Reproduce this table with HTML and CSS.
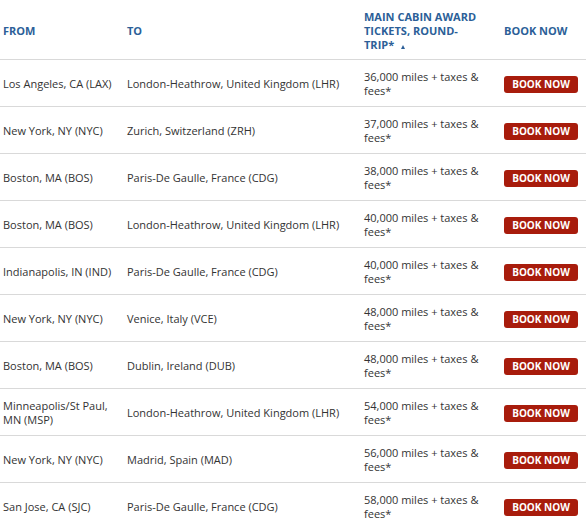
FILE: index.html
```html
<!DOCTYPE html>
<html>
<head>
<meta charset="utf-8">
<link rel="stylesheet" href="styles.css">
</head>
<body>
<table class="awards">
  <colgroup>
    <col class="c-from">
    <col class="c-to">
    <col class="c-miles">
    <col class="c-book">
  </colgroup>
  <thead>
    <tr>
      <th>FROM</th>
      <th>TO</th>
      <th>MAIN CABIN AWARD TICKETS, ROUND-TRIP*<span class="sort"></span></th>
      <th>BOOK NOW</th>
    </tr>
  </thead>
  <tbody>
    <tr><td>Los Angeles, CA (LAX)</td><td>London-Heathrow, United Kingdom (LHR)</td><td>36,000 miles + taxes &amp; fees*</td><td><a class="btn">BOOK NOW</a></td></tr>
    <tr><td>New York, NY (NYC)</td><td>Zurich, Switzerland (ZRH)</td><td>37,000 miles + taxes &amp; fees*</td><td><a class="btn">BOOK NOW</a></td></tr>
    <tr><td>Boston, MA (BOS)</td><td>Paris-De Gaulle, France (CDG)</td><td>38,000 miles + taxes &amp; fees*</td><td><a class="btn">BOOK NOW</a></td></tr>
    <tr><td>Boston, MA (BOS)</td><td>London-Heathrow, United Kingdom (LHR)</td><td>40,000 miles + taxes &amp; fees*</td><td><a class="btn">BOOK NOW</a></td></tr>
    <tr><td>Indianapolis, IN (IND)</td><td>Paris-De Gaulle, France (CDG)</td><td>40,000 miles + taxes &amp; fees*</td><td><a class="btn">BOOK NOW</a></td></tr>
    <tr><td>New York, NY (NYC)</td><td>Venice, Italy (VCE)</td><td>48,000 miles + taxes &amp; fees*</td><td><a class="btn">BOOK NOW</a></td></tr>
    <tr><td>Boston, MA (BOS)</td><td>Dublin, Ireland (DUB)</td><td>48,000 miles + taxes &amp; fees*</td><td><a class="btn">BOOK NOW</a></td></tr>
    <tr><td>Minneapolis/St Paul, MN (MSP)</td><td>London-Heathrow, United Kingdom (LHR)</td><td>54,000 miles + taxes &amp; fees*</td><td><a class="btn">BOOK NOW</a></td></tr>
    <tr><td>New York, NY (NYC)</td><td>Madrid, Spain (MAD)</td><td>56,000 miles + taxes &amp; fees*</td><td><a class="btn">BOOK NOW</a></td></tr>
    <tr><td>San Jose, CA (SJC)</td><td>Paris-De Gaulle, France (CDG)</td><td>58,000 miles + taxes &amp; fees*</td><td><a class="btn">BOOK NOW</a></td></tr>
  </tbody>
</table>
</body>
</html>
```

FILE: styles.css
```css
html, body {
  margin: 0;
  padding: 0;
  background: #ffffff;
}

body {
  font-family: "Open Sans", "Liberation Sans", Arial, sans-serif;
  font-size: 11px;
  line-height: 14px;
  color: #333333;
}

.awards {
  width: 586px;
  border-collapse: collapse;
  table-layout: fixed;
}

.c-from { width: 124px; }
.c-to { width: 237px; }
.c-miles { width: 140px; }
.c-book { width: 85px; }

.awards th,
.awards td {
  padding: 2px 7px 0 3px;
  text-align: left;
  vertical-align: middle;
}

.awards th:nth-child(3),
.awards td:nth-child(3) {
  padding-right: 19px;
}

.awards th {
  height: 57px;
  font-weight: 700;
  color: #2c5f98;
  border-bottom: 1px solid #d9d9d9;
}

.awards td {
  height: 44px;
  border-bottom: 1px solid #d9d9d9;
}

.awards tbody tr:last-child td {
  border-bottom: none;
}

.sort {
  display: inline-block;
  width: 0;
  height: 0;
  margin-left: 7px;
  border-left: 2px solid transparent;
  border-right: 2px solid transparent;
  border-bottom: 4px solid #2c5f98;
  vertical-align: 0;
}

.btn {
  display: inline-block;
  width: 74px;
  height: 17px;
  line-height: 17px;
  text-align: center;
  background: #a81c0c;
  color: #ffffff;
  font-size: 10px;
  font-weight: 700;
  border-radius: 3px;
  text-decoration: none;
}
```
